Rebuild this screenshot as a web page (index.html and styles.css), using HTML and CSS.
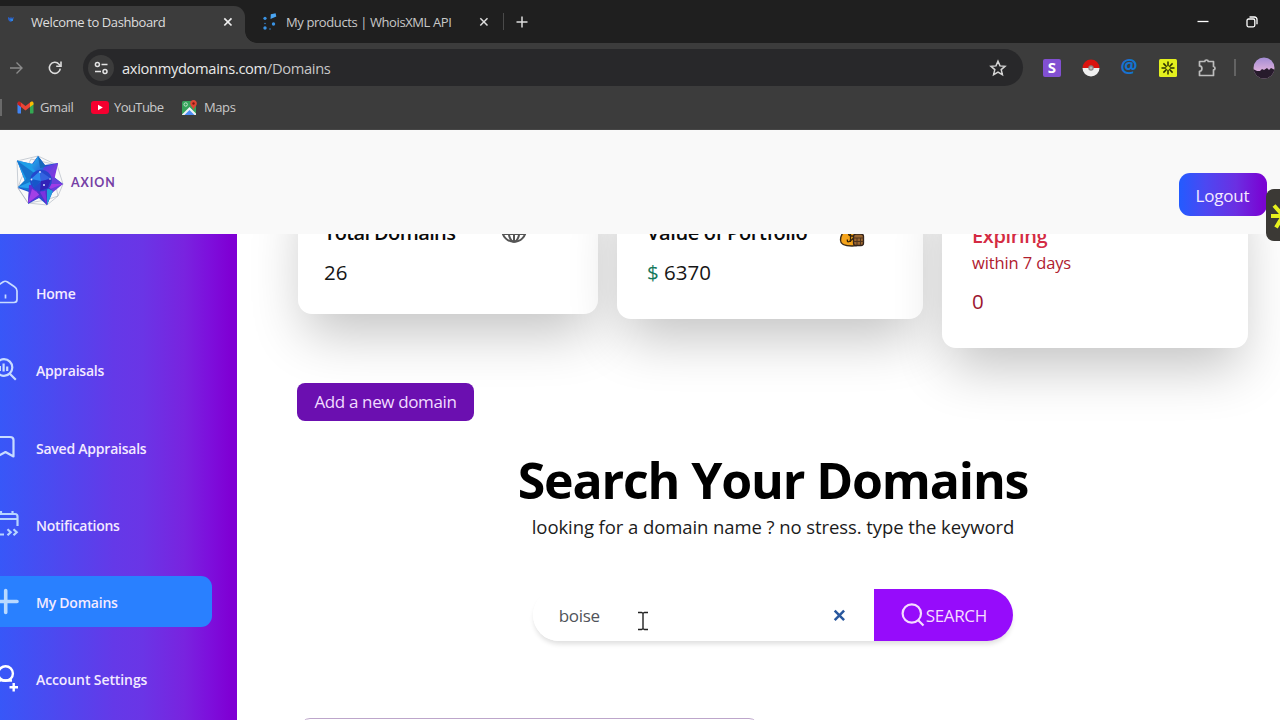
FILE: index.html
```html
<!DOCTYPE html>
<html lang="en">
<head>
<meta charset="utf-8">
<title>Welcome to Dashboard</title>
<link rel="stylesheet" href="styles.css">
</head>
<body>
<div class="browser">
  <div class="tabstrip">
    <div class="tab tab-active">
      <svg class="tab-fav fav-axion" width="16" height="16" viewBox="0 0 16 16"><path d="M2 3l2 1 1-1 1 1 2-1-1 3-2 2-2-1-1-2z" fill="#2c5fc0"/><path d="M4 5h3v2H5z" fill="#2f86e0"/></svg>
      <span class="tab-title title-dash">Welcome to Dashboard</span>
      <svg class="tab-close" width="10" height="10" viewBox="0 0 10 10"><path d="M1.3 1.3l7.200 7.200M8.500 1.300L1.300 8.500" stroke="#eee" stroke-width="1.700"/></svg>
    </div>
    <div class="tab tab-idle">
      <svg class="tab-fav" width="18" height="20" viewBox="0 0 18 20"><path d="M9.500 7L9.800 2.200l4.800-1L15.300 4.500z" fill="#4aa5f2"/><g fill="#3a93e4"><circle cx="4" cy="6.300" r="1.600"/><circle cx="12.500" cy="12" r="1.700"/><circle cx="4" cy="16" r="1.700"/><circle cx="4" cy="11.500" r=".7"/><circle cx="9" cy="17" r=".7"/></g></svg>
      <span class="tab-title title-whois">My products | WhoisXML API</span>
      <svg class="tab-close" width="10" height="10" viewBox="0 0 10 10"><path d="M1.300 1.300l7.200 7.200M8.500 1.300L1.300 8.500" stroke="#ddd" stroke-width="1.500"/></svg>
    </div>
    <span class="tab-sep"></span>
    <svg class="tab-new" width="12" height="12" viewBox="0 0 12 12"><path d="M6 .5v11M.5 6h11" stroke="#ddd" stroke-width="1.500"/></svg>
    <div class="window-buttons">
      <svg width="12" height="12" viewBox="0 0 12 12"><path d="M.5 5.500h11" stroke="#fff" stroke-width="1.300"/></svg>
      <svg width="12" height="12" viewBox="0 0 12 12" fill="none" stroke="#fff" stroke-width="1.300"><rect x="1" y="3" width="7.800" height="7.800" rx="1.500"/><path d="M3.500 1h5a2.500 2.500 0 0 1 2.500 2.500v4.800"/></svg>
    </div>
  </div>
  <div class="toolbar">
    <svg class="nav-forward" width="16" height="16" viewBox="0 0 16 16" fill="none" stroke="#8b8b8b" stroke-width="1.400"><path d="M2 8h12M8.500 2.500L14 8l-5.500 5.500"/></svg>
    <svg class="nav-reload" width="16" height="16" viewBox="0 0 16 16" fill="none" stroke="#ddd" stroke-width="1.600"><path d="M13.300 8.600A5.500 5.500 0 1 1 12 4.200l1.500 1.600"/><path d="M14 1.500v4.800H9.200"/></svg>
    <div class="omnibox">
      <span class="site-info"><svg width="15" height="14" viewBox="0 0 15 14" fill="none" stroke="#e4e4e4" stroke-width="1.500"><circle cx="3.400" cy="3.500" r="2"/><path d="M7.500 3.500h6M1 10.500h6"/><circle cx="11" cy="10.500" r="2"/></svg></span>
      <span class="url">axionmydomains.com<span class="url-path">/Domains</span></span>
      <svg class="star" width="18" height="18" viewBox="0 0 18 18" fill="none" stroke="#d5d5d5" stroke-width="1.500"><path d="M9 2.200l2 4.700 5 .4-3.800 3.300 1.200 5L9 13l-4.400 2.600 1.200-5L2 7.300l5-.4z"/></svg>
    </div>
    <div class="extensions">
      <span class="ext-s">S</span>
      <svg width="18" height="18" viewBox="0 0 18 18"><path d="M.5 9a8.500 8.500 0 0 1 17 0z" fill="#d9130f"/><path d="M.5 9a8.500 8.500 0 0 0 17 0z" fill="#efefef"/><circle cx="9" cy="9" r="2.700" fill="#888"/><circle cx="9" cy="9" r="1.500" fill="#b8b8b8"/></svg>
      <span class="ext-at">@</span>
      <svg width="18" height="18" viewBox="0 0 18 18"><rect width="18" height="18" rx="1.500" fill="#e3f01e"/><path d="M9 2.500v4.700M9 10.800v4.700M2.500 9h4.700M10.800 9h4.700M4.400 4.400l3.300 3.300M10.300 10.300l3.300 3.300M13.600 4.400l-3.300 3.300M7.700 10.300l-3.300 3.300" stroke="#2b3000" stroke-width="1.500"/></svg>
      <svg width="20" height="20" viewBox="0 0 20 20" fill="none" stroke="#bdbdbd" stroke-width="1.700" stroke-linejoin="round"><path d="M2.500 3.500h5.300c0-2 3.400-2 3.400 0h5.300v5c2 0 2 3.400 0 3.400v5.600h-14v-4.200c3.200 0 3.200-5.400 0-5.400z"/></svg>
    </div>
    <span class="toolbar-sep"></span>
    <svg class="avatar" width="22" height="22" viewBox="0 0 22 22"><defs><clipPath id="av"><circle cx="11" cy="11" r="10.500"/></clipPath><linearGradient id="sky" x2="0" y2="1"><stop offset="0" stop-color="#a18bd4"/><stop offset=".6" stop-color="#d9addc"/></linearGradient></defs><g clip-path="url(#av)"><path d="M0 0h22v22H0z" fill="url(#sky)"/><path d="M0 12l4 2 3 0 2-2 2 1 3-2 2 2 2-2 4 2v9H0z" fill="#271b2c"/></g></svg>
  </div>
  <div class="bookmarks">
    <span class="bm-edge"></span>
    <svg width="17" height="13" viewBox="0 0 17 13"><path d="M.5 2v9.500c0 .6.400 1 1 1H4V5z" fill="#4285f4"/><path d="M16.500 2v9.500c0 .6-.4 1-1 1H13V5z" fill="#34a853"/><path d="M13 1.500V6l3.500-2.600V2c0-1.400-1.500-2-2.500-1.200z" fill="#fbbc04"/><path d="M4 6V1.500l4.500 3.400L13 1.500V6L8.500 9.400z" fill="#ea4335"/><path d="M.5 2v1.400L4 6V1.500L3 .8C2 0 .5.600.5 2z" fill="#c5221f"/></svg>
    <span class="bm-label bm-gmail">Gmail</span>
    <svg width="18" height="13" viewBox="0 0 18 13"><rect width="18" height="13" rx="3" fill="#f5002f"/><path d="M7 3.800v5.400l4.800-2.700z" fill="#fff"/></svg>
    <span class="bm-label bm-youtube">YouTube</span>
    <svg width="17" height="17" viewBox="0 0 17 17"><rect x="1" y="2" width="14" height="14" rx="1.500" fill="#35a35a"/><path d="M1.500 16L8.500 9l6.500 7z" fill="#4c8df6"/><path d="M1 15.500L8.500 8l6.500 6.500V16h-1.500l-5-5-5 5H1z" fill="#eef2f4"/><circle cx="4.700" cy="5.500" r="1.700" fill="none" stroke="#bfe5cb"/><path d="M12.500 1a3.400 3.400 0 0 1 3.300 4c-.3 2-2.800 3.500-3.300 6-.5-2.500-3-4-3.300-6a3.400 3.400 0 0 1 3.300-4z" fill="#df4534"/><circle cx="12.500" cy="4.500" r="1.200" fill="#7d1a14"/></svg>
    <span class="bm-label bm-maps">Maps</span>
  </div>
</div>

<header class="header">
  <div class="brand">
    <svg class="brand-star" width="48" height="52" viewBox="0 0 48 52">
      <defs>
        <linearGradient id="blue" x2="1" y2="1"><stop offset="0" stop-color="#25b8ee"/><stop offset="1" stop-color="#244bd0"/></linearGradient>
        <linearGradient id="vio" x2="1" y2="1"><stop offset="0" stop-color="#3c4be0"/><stop offset="1" stop-color="#9b2fe0"/></linearGradient>
      </defs>
      <path d="M1 6L22 1l19 9 6 19-5 12-11 9-19-2L2 33zM15 4l26 6-4 7 5 24-12 4-18 3L2 33l3-9z" fill="none" stroke="#98a3b0" stroke-width=".5"/>
      <path d="M1 5.500l15 3.500L22 1l7 9 13-2-4 14 9 7-11 6-5 15-8-7-11 6 1-12-11-4 7-7z" fill="#234fd2"/>
      <path d="M1 5.500L17 9l9 12-17 5z" fill="#1e9fe8"/><path d="M1 5.500L12 27l9-7z" fill="#1772cc"/>
      <path d="M22 1l8 11-5 9-10-9z" fill="url(#blue)"/><path d="M22 1l2 12 6-1z" fill="#1769bb"/>
      <path d="M42 8l-14 4-4 13 14 1z" fill="url(#vio)"/><path d="M42 8l-5 11-9 4z" fill="#7340dd"/>
      <path d="M47 29l-11-8-12 11 12 6z" fill="#6740db"/><path d="M47 29l-13 0-5 7z" fill="#a03be5"/>
      <path d="M2 32l9-9 13 5-8 9z" fill="#1479ce"/><path d="M2 32l12-5 6 7z" fill="#27a0ee"/>
      <path d="M12 48l1-18 15-1-4 13z" fill="#5e30d5"/><path d="M12 48l4-14 8 5z" fill="#a340e6"/>
      <path d="M31 50l-10-13 7-9 9 8z" fill="#4935c8"/><path d="M31 50V33l6 3z" fill="#209ddd"/><path d="M31 50l-7-13 5-4z" fill="#7b31df"/>
      <circle cx="25" cy="25.500" r="10.800" fill="#2448cd"/>
      <path d="M15 24l9-8 1 10-7 6z" fill="#2c8bed"/><path d="M24 16l10 7-9 4z" fill="#3463e0"/><path d="M25 26l10-2-3 9-8 3z" fill="#3223b8"/><path d="M15 24l10 2-7 7z" fill="#1656c9"/>
      <g fill="#d9e8ff"><circle cx="24" cy="17" r=".9"/><circle cx="15.500" cy="24.500" r=".9"/><circle cx="28" cy="30" r="1"/><circle cx="34" cy="24" r=".8"/></g>
    </svg>
    <span class="brand-name">AXION</span>
  </div>
  <button class="logout">Logout</button>
</header>

<div class="page">
  <nav class="sidebar">
    <a class="nav-item"><svg class="nav-icon" width="30" height="36" viewBox="0 0 30 36" fill="none" stroke="#c8dcff" stroke-width="1.700" stroke-linejoin="round"><path d="M-7 13.500L3 7q2.200-1.500 4.500 0L14.500 11.800Q17 13.500 17 16v8.500q0 3-3 3H-4q-3 0-3-3z"/><path d="M5.500 19.500v4"/></svg><span class="nav-label l-home">Home</span></a>
    <a class="nav-item"><svg class="nav-icon" width="30" height="36" viewBox="0 0 30 36" fill="none" stroke="#c8dcff" stroke-width="2.200"><circle cx="4" cy="15.500" r="8.300"/><path d="M9.800 21.800l6 6M-.1 14v5M3.600 11.500v8M7.200 14.500v4.500" /></svg><span class="nav-label l-app">Appraisals</span></a>
    <a class="nav-item"><svg class="nav-icon" width="30" height="36" viewBox="0 0 30 36" fill="none" stroke="#c8dcff" stroke-width="2.200" stroke-linejoin="round"><path d="M-3 8h13q3.500 0 3.500 3V27.500L5.500 23-3 27.500z"/></svg><span class="nav-label l-saved">Saved Appraisals</span></a>
    <a class="nav-item"><svg class="nav-icon" width="30" height="36" viewBox="0 0 30 36" fill="none" stroke="#b7d5ff" stroke-width="2.200"><path d="M-7 8h22q2.500 0 2.500 2.500V20M-7 13h24.500M1 5v4M12.500 5v4M-5 28.500h9M7.500 23.200l3.200 3-3.200 3M13.500 23.200l3.200 3-3.200 3"/></svg><span class="nav-label l-notif">Notifications</span></a>
    <a class="nav-item nav-active"><svg class="nav-icon" width="30" height="36" viewBox="0 0 30 36" fill="none" stroke="#b9d9ff" stroke-width="3.600" stroke-linecap="round"><path d="M5.700 6.500v22M-6 17.500h23"/></svg><span class="nav-label l-mydom">My Domains</span></a>
    <a class="nav-item"><svg class="nav-icon" width="30" height="36" viewBox="0 0 30 36" fill="none" stroke="#fff" stroke-width="2.400"><circle cx="5.600" cy="12.500" r="7.300"/><path d="M-5 24.500q3-6 8-5h9M13.700 22v8.500M9.500 26.300H18"/></svg><span class="nav-label l-acct">Account Settings</span></a>
  </nav>
  <main class="main">
    <section class="cards">
      <article class="card card-total">
        <div class="card-head"><h2 class="card-title t-total">Total Domains</h2>
          <svg class="globe" width="26" height="26" viewBox="0 0 26 26" fill="none" stroke="#555" stroke-width="2"><circle cx="13" cy="13" r="11.800"/><ellipse cx="13" cy="13" rx="5.500" ry="11.800"/><path d="M1.500 9h23M1.500 17h23M13 1v24"/></svg></div>
        <p class="card-value">26</p>
      </article>
      <article class="card card-portfolio">
        <div class="card-head"><h2 class="card-title t-value">Value of Portfolio</h2>
          <svg class="money" width="26" height="28" viewBox="0 0 26 28"><path d="M9 3h9l-2 5c5 3 7 7 7 12 0 5-4 6-10 6S1.500 25 1.500 20c0-5 3-9 8-12z" fill="#f4a31a" stroke="#3a2a18" stroke-width="1.400"/><path d="M13.500 12.500q-4-1.500-4 1t4 2.500-1 4-4-.5M11.500 11v11" fill="none" stroke="#332208" stroke-width="1.300"/><rect x="14.500" y="14" width="10" height="11.500" rx="2.500" fill="#9a6630" stroke="#33241c" stroke-width="1.300"/><path d="M14.500 18h10M14.500 21.500h10M18 18v7M21.500 18v7" stroke="#50351f"/></svg></div>
        <p class="card-value"><span class="dollar">$</span> 6370</p>
      </article>
      <article class="card card-expiring">
        <h2 class="card-title t-exp">Expiring</h2>
        <p class="card-note">within 7 days</p>
        <p class="card-value exp-value">0</p>
      </article>
    </section>
    <button class="add-domain">Add a new domain</button>
    <section class="search">
      <h1 class="search-title">Search Your Domains</h1>
      <p class="search-sub">looking for a domain name ? no stress. type the keyword</p>
      <div class="search-bar">
        <div class="search-field"><span class="search-text">boise</span>
          <svg width="13" height="13" viewBox="0 0 13 13"><path d="M1.700 1.700l9.400 9.400M11.100 1.700l-9.400 9.400" stroke="#28579d" stroke-width="2.500"/></svg></div>
        <button class="search-button"><svg width="24" height="24" viewBox="0 0 24 24" fill="none" stroke="#f5dcff" stroke-width="2.200"><circle cx="10.800" cy="10.500" r="9.200"/><path d="M17 17l5.500 5.500"/></svg><span class="search-label">SEARCH</span></button>
      </div>
    </section>
    <div class="results"></div>
  </main>
</div>
<div class="side-widget"><svg width="14" height="52" viewBox="0 0 14 52"><path d="M5 27h9M8 16.500l8 9M10 38.500l6-10" stroke="#e6f01e" stroke-width="4"/></svg></div>
<svg class="cursor" width="12" height="20" viewBox="0 0 12 20" fill="none" stroke="#222" stroke-width="1.400"><path d="M1 1.500h3.500L6 2.300l1.500-.8H11M6 2v16M1 18.500h3.500L6 17.700l1.500.8H11"/></svg>
</body>
</html>
```
FILE: styles.css
```css
* { box-sizing: border-box; }
body { margin: 0; width: 1280px; height: 720px; overflow: hidden; display: flex; flex-direction: column; background: #fff; color: #111; font-family: "Open Sans", "Noto Sans", sans-serif; position: relative; }
h1, h2, p { margin: 0; font-weight: 400; white-space: nowrap; }
button { border: 0; padding: 0; font: inherit; white-space: nowrap; }
span { white-space: nowrap; }
svg { flex: none; display: block; }

.browser { flex: none; height: 130px; background: #3c3c3c; border-bottom: 1px solid #464646; }
.tabstrip { height: 43px; display: flex; align-items: center; background: #1f1f1f; }
.tab { height: 43px; display: flex; align-items: center; flex: none; }
.tab-active { width: 245px; margin-top: 6px; height: 37px; padding: 0 12px 6px 6px; background: #3c3c3c; border-radius: 0 11px 0 0; }
.tab-idle { width: 258px; height: 43px; padding: 0 14px 0 14px; position: relative; background: radial-gradient(circle at 12px 31px, #1f1f1f 12px, #3c3c3c 12.500px) 0 0 / 12px 43px no-repeat; }
.tab-idle { background: radial-gradient(circle at 12px 0, #1f1f1f 11.500px, #3c3c3c 12.200px) 0 31px / 12px 12px no-repeat #1f1f1f; }
.fav-axion { margin-right: 9px; }
.tab-idle .tab-fav { margin: 0 7px 0 2px; width: 18px; }
.tab-title { font-size: 13px; color: #dedede; padding-top: 1px; }
.title-dash { letter-spacing: -0.4px; }
.title-whois { letter-spacing: -0.4px; color: #c9c9c9; }
.tab-close { margin-left: auto; }
.tab-sep { width: 1px; height: 17px; background: #4a4a4a; }
.tab-new { margin-left: 12px; }
.window-buttons { margin-left: auto; display: flex; gap: 37px; padding-right: 22px; }
.toolbar { height: 49px; display: flex; align-items: center; }
.nav-forward { margin-left: 8px; }
.nav-reload { margin-left: 23px; }
.omnibox { margin-left: 20px; width: 940px; height: 37px; display: flex; align-items: center; border-radius: 19px; background: #28282a; padding: 0 16px 0 5px; }
.site-info { width: 26px; height: 26px; border-radius: 50%; background: #3c3c3c; display: grid; place-items: center; }
.url { margin-left: 8px; font-size: 14.700px; line-height: 20px; letter-spacing: -0.340px; color: #e8e8e8; }
.url-path { color: #c6c6c6; }
.star { margin-left: auto; }
.extensions { margin-left: 20px; display: flex; align-items: center; gap: 20.500px; }
.ext-s { width: 18px; height: 18px; border-radius: 2px; background: #8250d2; color: #fff; font: 700 15px/17px "Open Sans", sans-serif; text-align: center; }
.ext-at { width: 18px; height: 22px; color: #1473d0; font: 700 19px/19px "Open Sans", sans-serif; display: flex; justify-content: center; }
.toolbar-sep { width: 1.500px; height: 17px; margin-left: 17px; background: #636363; }
.avatar { margin-left: 17px; }
.bookmarks { height: 30px; display: flex; align-items: center; }
.bm-edge { width: 2px; height: 17px; background: #6a6a6a; margin-right: 15px; }
.bm-label { font-size: 13px; color: #c9c9c9; margin-left: 6px; letter-spacing: -0.4px; }
.bm-gmail { width: 51px; }
.bm-youtube { width: 67px; margin-left: 5px; letter-spacing: -0.580px; }
.bm-maps { margin-left: 6px; }

.header { flex: none; height: 104px; background: #f9f9f9; display: flex; justify-content: space-between; padding: 0 13.500px 0 16px; position: relative; z-index: 2; }
.brand { display: flex; align-items: center; padding-bottom: 2px; }
.brand-name { margin-left: 7px; font: 700 12.400px Lato, sans-serif; letter-spacing: 0.900px; color: #7540a5; padding-top: 2px; }
.logout { margin-top: 43px; width: 88px; height: 43px; padding-top: 2px; border-radius: 11px; color: #f4eaff; font-size: 17px; letter-spacing: -0.200px; background: linear-gradient(90deg, #235bff, #4c48f2 30%, #6b2fe2 65%, #7905d3 95%); }

.page { flex: 1; min-height: 0; display: flex; }
.sidebar { flex: none; width: 237px; padding-top: 33px; display: flex; flex-direction: column; gap: 25.700px; background: linear-gradient(90deg, #3857f8, #4b4af0 22%, #6439e8 48%, #6a35e6 60%, #7923df 78%, #7d10dc 88%, #7f00d4 97%); }
.nav-item { flex: none; width: 211.500px; height: 51.500px; display: flex; align-items: center; border-radius: 0 11px 11px 0; }
.nav-active { background: #2980ff; }
.nav-label { margin-left: 6px; padding-top: 2px; font-size: 14px; font-weight: 600; letter-spacing: -0.230px; color: #f3eaff; }
.l-acct { letter-spacing: -0.100px; }

.main { flex: 1; min-width: 0; overflow: hidden; padding-left: 60px; display: flex; flex-direction: column; }
.cards { flex: none; display: flex; gap: 19px; padding-left: 1px; margin-top: -60px; height: 209px; align-items: flex-start; }
.card { flex: none; width: 306px; border-radius: 14px; background: #fff; box-shadow: 0 26px 53px -7px rgba(0,0,0,.24); padding: 40px 30px 0; }
.card-total { width: 300px; height: 140px; padding-left: 26px; }
.card-portfolio { height: 145px; }
.card-expiring { height: 174px; }
.card-head { display: flex; align-items: center; height: 38px; }
.card-title { font-size: 20px; line-height: 38px; font-weight: 600; color: #0b0b0b; }
.t-total { letter-spacing: -0.620px; }
.t-value { letter-spacing: -0.400px; }
.t-exp { letter-spacing: -0.380px; }
.globe { margin-left: 45.500px; margin-top: -6px; }
.money { margin-left: 32px; margin-top: 1px; }
.card-value { font-size: 20.500px; line-height: 41px; color: #161616; }
.dollar { color: #16785b; }
.card-expiring .card-title { margin-top: 3px; color: #d42b43; }
.card-note { font-size: 16.500px; line-height: 24px; margin-top: -4px; letter-spacing: -0.120px; color: #b0202f; }
.exp-value { margin-top: 6px; color: #9c1630; }
.add-domain { flex: none; width: 177px; height: 38px; padding-bottom: 1px; border-radius: 8px; background: #6b0fb0; color: #f1dcff; font-size: 17px; letter-spacing: -0.360px; }
.search { padding-top: 30px; width: 952px; display: flex; flex-direction: column; align-items: center; }
.search-title { font-size: 50px; line-height: 58px; font-weight: 700; letter-spacing: -1.150px; color: #000; }
.search-sub { font-size: 18.500px; line-height: 28px; margin-top: 4px; letter-spacing: -0.080px; color: #1b1b1b; }
.search-bar { margin-top: 48px; width: 480.500px; height: 52px; display: flex; border-radius: 26px; box-shadow: 0 4px 5px -1px rgba(0,0,0,.13); }
.search-field { flex: 1; display: flex; align-items: center; justify-content: space-between; padding: 0 28px 0 26px; background: #fff; border-radius: 26px 0 0 26px; }
.search-text { font-size: 17px; letter-spacing: -0.300px; color: #50535a; }
.search-button { width: 139.500px; display: flex; align-items: center; padding-left: 27px; background: #960cfb; color: #f5dcff; border-radius: 0 26px 26px 0; font-size: 17px; letter-spacing: -0.350px; }
.search-label { margin-left: 1px; }
.results { flex: none; margin: 77px 0 0 3px; width: 459px; height: 60px; border: 1px solid #bda6cb; border-radius: 10px; }

.side-widget { position: absolute; z-index: 3; left: 1266px; top: 189px; width: 14px; height: 52px; border-radius: 8px 0 0 8px; background: #3b3935; overflow: hidden; }
.cursor { position: absolute; left: 637px; top: 611px; }
```
